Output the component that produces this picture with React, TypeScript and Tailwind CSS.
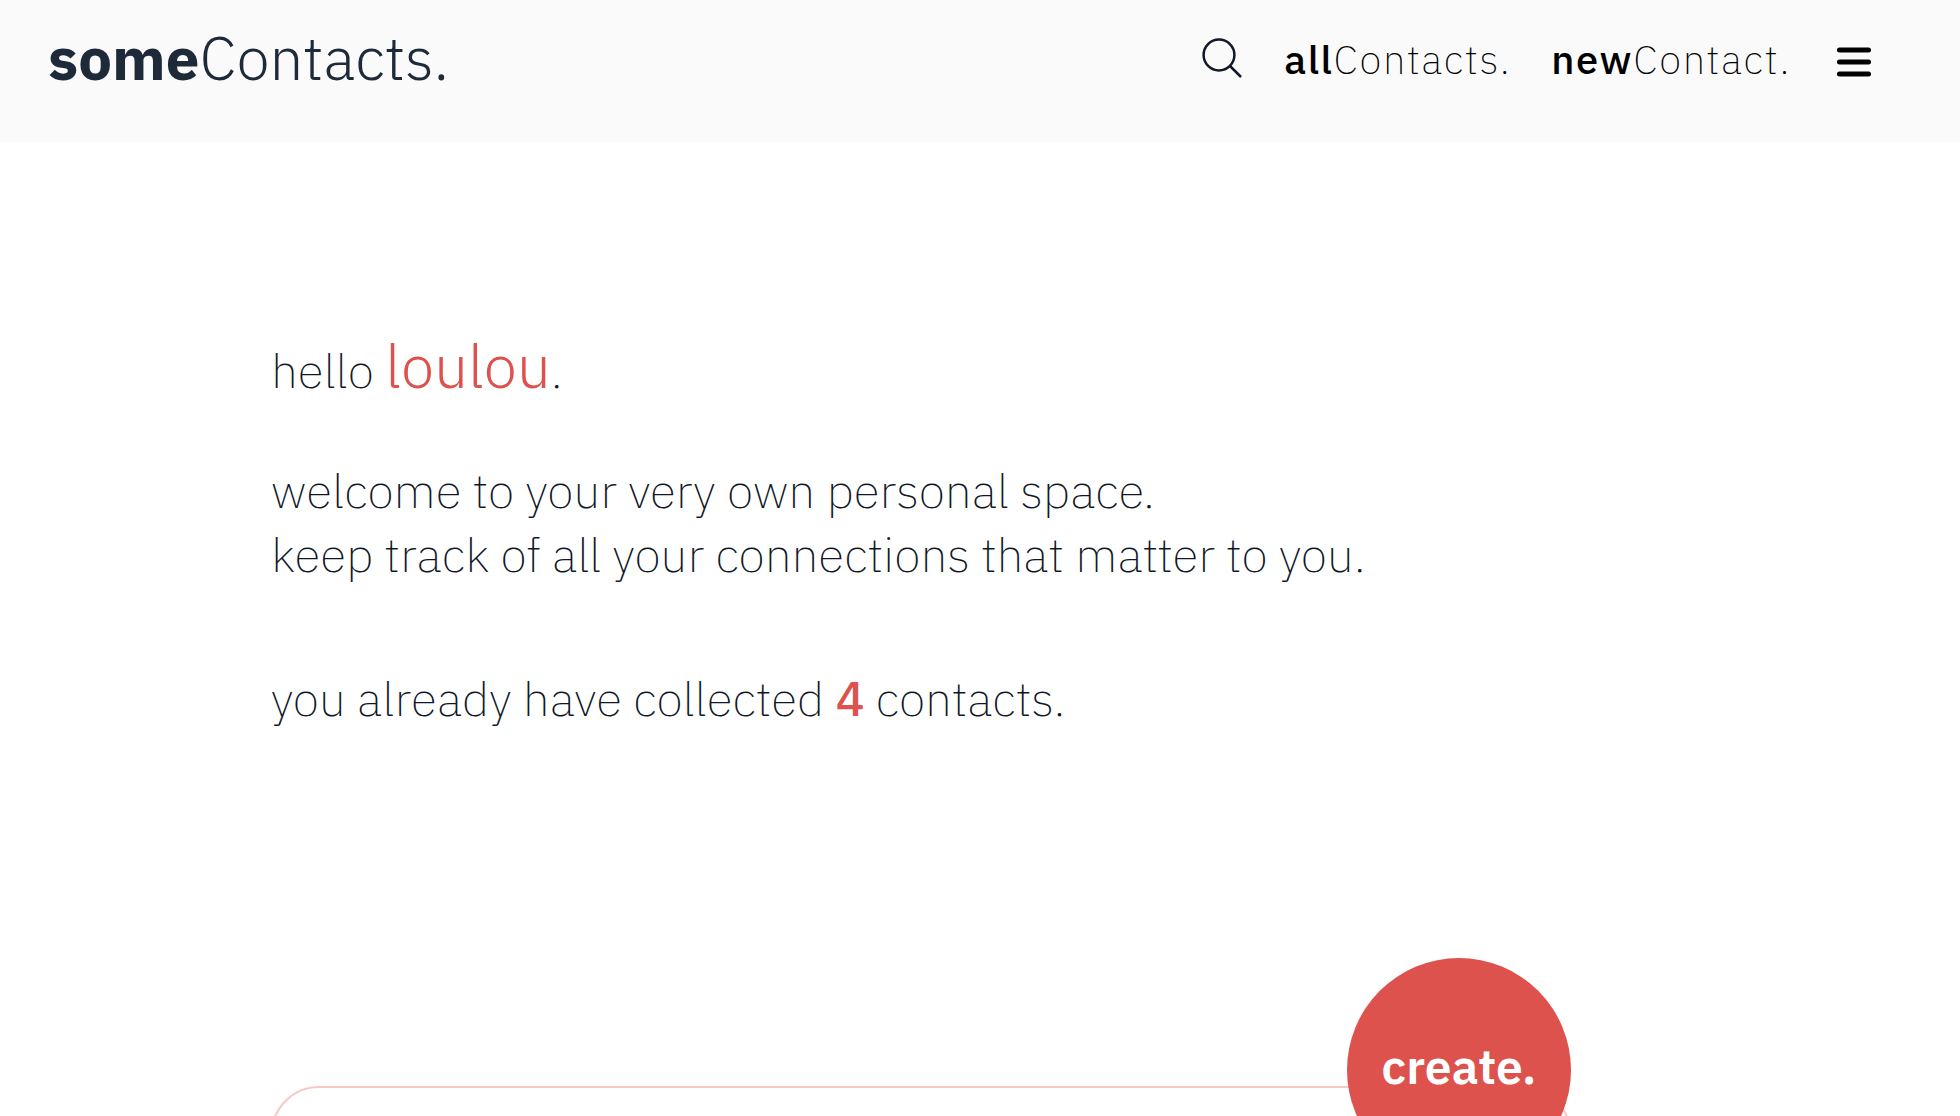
const navLink = "text-[40px] leading-[56px] font-extralight tracking-[0.04em] text-black";

function SearchIcon() {
  return (
    <svg viewBox="0 0 40 40" className="size-10" fill="none" stroke="#111827" strokeWidth="2.5" aria-hidden="true">
      <circle cx="17" cy="17" r="15.4" />
      <path d="M28 28 L39 39" />
    </svg>
  );
}

function MenuIcon() {
  return (
    <svg viewBox="0 0 34 30" className="h-[30px] w-[34px]" fill="none" stroke="#000" strokeWidth="5" strokeLinecap="round" aria-hidden="true">
      <path d="M2.5 3H31.5M2.5 15H31.5M2.5 27H31.5" />
    </svg>
  );
}

function Header() {
  return (
    <header className="flex h-[142px] shrink-0 items-start justify-between bg-[#fafafa] pt-[18px] pr-[89px] pl-12">
      <a href="#home" className="text-[60px] leading-[80px] font-light text-gray-800">
        <span className="font-bold">some</span>Contacts.
      </a>
      <nav className="flex items-center pt-[13px]">
        <button type="button" aria-label="Search" className="mr-[42px] pb-0.5">
          <SearchIcon />
        </button>
        <a href="#all" className={navLink + " mr-10"}>
          <span className="font-medium">all</span>Contacts.
        </a>
        <a href="#new" className={navLink + " mr-[46px]"}>
          <span className="font-medium">new</span>Contact.
        </a>
        <button type="button" aria-label="Menu" className="pt-1.5">
          <MenuIcon />
        </button>
      </nav>
    </header>
  );
}

export default function App() {
  return (
    <div className="flex max-h-screen flex-col overflow-hidden bg-white font-['IBM_Plex_Sans','Open_Sans',sans-serif] text-gray-900">
      <Header />
      <main className="px-[271px] pt-[188px] text-5xl leading-16 font-extralight">
        <h1>
          hello <span className="text-6xl leading-[72px] font-light text-[#dd524c]">loulou</span>.
        </h1>
        <p className="mt-14">
          welcome to your very own personal space.
          <br />
          keep track of all your connections that matter to you.
        </p>
        <p className="mt-20">
          you already have collected <span className="font-medium text-[#dd524c]">4</span> contacts.
        </p>
        <section className="relative mt-[356px] h-96 max-w-[1300px] rounded-[48px] border-2 border-[#f6c9c7]">
          <button
            type="button"
            className="absolute -top-[130px] -right-0.5 size-56 rounded-full bg-[#dd524c] pb-2 text-center font-semibold text-white"
          >
            create.
          </button>
        </section>
      </main>
    </div>
  );
}
